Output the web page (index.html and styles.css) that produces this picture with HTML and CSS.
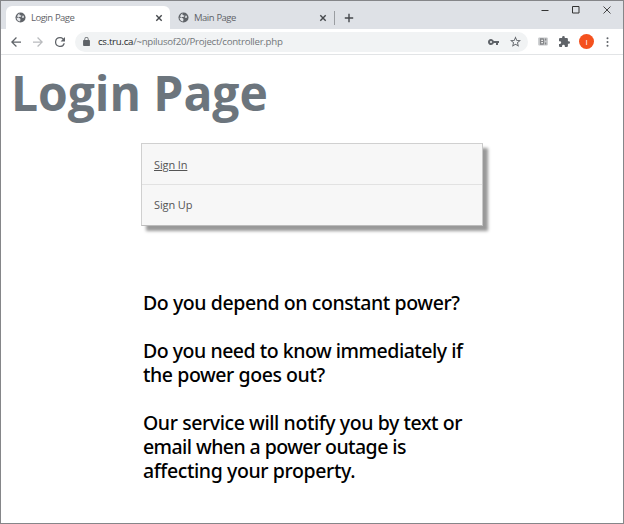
FILE: index.html
```html
<!DOCTYPE html>
<html lang="en">
<head>
<meta charset="utf-8">
<title>Login Page</title>
<link rel="stylesheet" href="styles.css">
</head>
<body>
<svg width="0" height="0" class="defs">
  <symbol id="globe" viewBox="0 0 24 24"><circle cx="12" cy="12" r="11" fill="#5f6368"/><path d="M11 3.500c-2 1-2 3 0 3.500l3 .5-1 3-4 .5-1 2 3 .5 1 3-1 4C6 20 3.500 16.500 3.500 12L7 13l1-1-3.500-2C6 5.500 8 4 11 3.500z M17 6l3 5-2 2-3-1 0-2 2-1z" fill="#e4e6ea"/></symbol>
  <symbol id="close" viewBox="0 0 8 8"><path d="M1.300 1.300l5.400 5.400M6.700 1.300l-5.400 5.400" stroke="#45484c" stroke-width="1.400"/></symbol>
</svg>
<div class="window">
  <header class="tabs">
    <div class="tab active"><svg class="globe"><use href="#globe"/></svg><span class="t1">Login Page</span><svg class="x"><use href="#close"/></svg></div>
    <div class="tab"><svg class="globe"><use href="#globe"/></svg><span class="t2">Main Page</span><svg class="x"><use href="#close"/></svg></div>
    <i class="divider"></i>
    <svg class="plus" viewBox="0 0 10 10"><path d="M5 .8v8.400M.8 5h8.400" stroke="#45484c" stroke-width="1.400"/></svg>
    <div class="controls">
      <svg width="8" height="8"><path d="M.5 4.500h7" stroke="#333"/></svg>
      <svg width="8" height="8"><path d="M.5 .5h6.500v6.500h-6.500z" fill="none" stroke="#333"/></svg>
      <svg width="8" height="8"><path d="M.5.5l7 7M7.500.5l-7 7" stroke="#333" stroke-width=".9"/></svg>
    </div>
  </header>
  <nav class="toolbar">
    <svg class="nav" viewBox="4 4 16 16"><path fill="#5f6368" d="M20 11H7.830l5.590-5.590L12 4l-8 8 8 8 1.410-1.410L7.830 13H20v-2z"/></svg>
    <svg class="nav" viewBox="4 4 16 16"><path fill="#b9bbbe" d="M12 4l-1.410 1.410L16.170 11H4v2h12.170l-5.580 5.590L12 20l8-8z"/></svg>
    <svg class="nav" viewBox="4 4 16 16"><path fill="#5f6368" d="M17.650 6.350A7.960 7.960 0 0 0 12 4a8 8 0 1 0 7.730 10h-2.080A6 6 0 1 1 12 6c1.660 0 3.140.69 4.220 1.780L13 11h7V4l-2.350 2.350z"/></svg>
    <div class="address">
      <svg class="lock" viewBox="4 1 16 21"><path fill="#5f6368" d="M18 8h-1V6A5 5 0 0 0 7 6v2H6a2 2 0 0 0-2 2v10c0 1.100.9 2 2 2h12a2 2 0 0 0 2-2V10a2 2 0 0 0-2-2zM9 6a3 3 0 0 1 6 0v2H9z"/></svg>
      <span class="url"><b>cs.tru.ca</b>/~npilusof20/Project/controller.php</span>
      <svg class="key" viewBox="1 6 22 12"><path fill="#5f6368" fill-rule="evenodd" d="M12.650 10A6 6 0 1 0 12.650 14H17v4h4v-4h2v-4zM7 14a2 2 0 1 1 0-4 2 2 0 0 1 0 4z"/></svg>
      <svg class="star" viewBox="2 2 20 19"><path fill="#5f6368" d="M22 9.240l-7.190-.62L12 2 9.190 8.630 2 9.240l5.460 4.730L5.820 21 12 17.270 18.180 21l-1.630-7.030zM12 15.400l-3.760 2.270 1-4.280-3.320-2.880 4.380-.38L12 6.100l1.710 4.040 4.380.38-3.320 2.880 1 4.280z"/></svg>
    </div>
    <svg class="ext" viewBox="0 0 10 9"><rect x=".2" y=".5" width="9.600" height="8" rx="1" fill="#c4c6c8"/><path d="M2 1.200h3.500l.6 1v4.600l-.6 1H2zM7 1.500h1.300v2H7zM7 5.500h1.300v2H7z" fill="#85878a"/><path d="M3.200 2.700h1.800v1.200h-1.800zM3.200 5h1.800v1.200h-1.800z" fill="#eee"/></svg>
    <svg class="puzzle" viewBox="2 1 21 21"><path fill="#5f6368" d="M20.500 11H19V7a2 2 0 0 0-2-2h-4V3.500a2.500 2.500 0 0 0-5 0V5H4a2 2 0 0 0-2 2v3.800h1.500a2.700 2.700 0 0 1 0 5.400H2V20a2 2 0 0 0 2 2h3.800v-1.500a2.700 2.700 0 0 1 5.400 0V22H17a2 2 0 0 0 2-2v-4h1.500a2.500 2.500 0 0 0 0-5z"/></svg>
    <span class="avatar">I</span>
    <svg class="dots" viewBox="0 0 3 10"><g fill="#5f6368"><circle cx="1.500" cy="1.300" r="1"/><circle cx="1.500" cy="5" r="1"/><circle cx="1.500" cy="8.700" r="1"/></g></svg>
  </nav>
  <main>
    <h1>Login Page</h1>
    <div class="menu"><a class="current">Sign In</a><a class="up">Sign Up</a></div>
    <section class="copy">
      <p><span class="l1">Do you depend on constant power?</span></p>
      <p><span class="l2">Do you need to know immediately if</span><span class="l3">the power goes out?</span></p>
      <p><span class="l4">Our service will notify you by text or</span><span class="l5">email when a power outage is</span><span class="l6">affecting your property.</span></p>
    </section>
  </main>
</div>
</body>
</html>
```
FILE: styles.css
```css
* { box-sizing: border-box; }
body { margin: 0; font-family: "Open Sans", "Noto Sans", sans-serif; }
svg { display: block; flex: none; }
.defs { position: absolute; }
.window { width: 624px; height: 524px; border: 1px solid #858689; background: #fff; overflow: hidden; }
.tabs { height: 28px; background: #dee1e6; display: flex; padding-left: 5px; }
.tab { width: 164px; height: 23px; margin-top: 5px; padding: 0 7px 0 9px; display: flex; align-items: center; font-size: 9px; color: #5f6368; white-space: nowrap; }
.t1, .t2 { letter-spacing: -.6px; word-spacing: .5px; letter-spacing: -.52px; }
.t1, .t2 { font-size: 9.500px; }
.tab.active { background: #fff; border-radius: 6px 6px 0 0; }
.tab:nth-child(2) { width: 164px; padding-left: 8px; }
.globe { width: 11px; height: 11px; margin-right: 5px; }
.x { width: 8px; height: 8px; margin-left: auto; }
.divider { width: 1px; height: 14px; background: #9a9da1; margin-top: 10px; }
.plus { width: 10px; height: 10px; margin: 12px 0 0 9px; }
.controls { display: flex; gap: 23px; margin: 5px 12px 0 auto; }
.toolbar { height: 26px; display: flex; align-items: center; padding-left: 10px; border-bottom: 1px solid #e2e4e6; }
.nav { width: 10px; height: 10px; margin-right: 12px; }
.nav:nth-child(3) { margin-right: 10px; }
.address { width: 453px; height: 20px; border-radius: 10px; background: #f1f3f4; display: flex; align-items: center; padding: 0 7px 0 8px; }
.lock { width: 7px; height: 9px; margin-right: 8px; }
.url { font-size: 9.700px; line-height: 18px; letter-spacing: -.29px; color: #72767a; white-space: nowrap; }
.url b { font-weight: 400; color: #292b2e; }
.key { width: 11px; height: 6px; margin-left: auto; }
.star { width: 11px; height: 11px; margin-left: 11px; }
.ext { width: 10px; height: 9px; margin-left: 10px; }
.puzzle { width: 11px; height: 11px; margin-left: 11px; }
.avatar { width: 15px; height: 15px; border-radius: 50%; background: #f4511e; color: #fff; font-size: 8px; line-height: 15px; text-align: center; margin-left: 9px; }
.dots { width: 3px; height: 10px; margin-left: 12px; }
h1 { margin: 0; padding: 8px 0 0 10px; height: 88px; font-size: 48px; line-height: 60px; font-weight: 700; letter-spacing: -.05px; color: #6c757d; white-space: nowrap; }
.menu { width: 342px; height: 83px; margin-left: 140px; border: 1px solid; border-color: #d0d0d0 #c8c8c8 #bcbcbc #d0d0d0; background: #f7f7f7; box-shadow: 5px 5px 3px #999; font-size: 11px; letter-spacing: -.12px; color: #555; }
.menu a { display: block; height: 41px; line-height: 41px; padding-left: 12px; }
.menu .current { border-bottom: 1px solid #e2e2e2; text-decoration: underline; }
.menu .up { line-height: 40px; }
.copy { margin: 65px 0 0 142px; width: 350px; font-family: "Noto Sans", sans-serif; font-size: 19.500px; font-weight: 500; line-height: 24px; color: #000; white-space: nowrap; }
.copy p { margin: 0 0 24px; }
.copy span { display: block; height: 24px; }
.l1 { letter-spacing: -.42px; }
.l2 { letter-spacing: -.48px; }
.l3 { letter-spacing: -.43px; }
.l4 { letter-spacing: -.42px; }
.l5 { letter-spacing: -.57px; }
.l6 { letter-spacing: -.39px; }
```
